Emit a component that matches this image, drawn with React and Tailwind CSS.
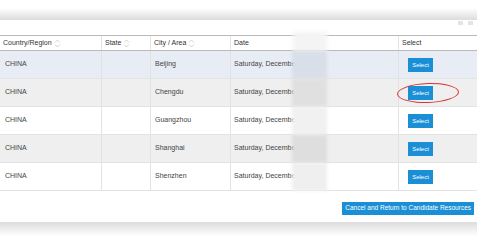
import React from "react";

const rows = [
  { city: "Beijing", bg: "bg-[#e8edf5]", blur: "bg-[#d9dfe8]", circled: false },
  { city: "Chengdu", bg: "bg-[#efefef]", blur: "bg-[#e0e0e0]", circled: true },
  { city: "Guangzhou", bg: "bg-white", blur: "bg-[#f1f1f1]", circled: false },
  { city: "Shanghai", bg: "bg-[#efefef]", blur: "bg-[#dedede]", circled: false },
  { city: "Shenzhen", bg: "bg-white", blur: "bg-[#efefef]", circled: false },
];

const SortIcon = () => (
  <svg width="7" height="9" viewBox="0 0 7 9" className="ml-[2px] inline-block">
    <path d="M1 3.5 L3.5 1 L6 3.5" fill="none" stroke="#c8c8c8" strokeWidth="0.8" />
    <path d="M1 5.5 L3.5 8 L6 5.5" fill="none" stroke="#c8c8c8" strokeWidth="0.8" />
  </svg>
);

const cols = "grid grid-cols-[102px_49px_80px_168px_1fr]";

export default function App() {
  return (
    <div className="w-[477px] h-[247px] bg-white overflow-hidden font-['Liberation_Sans',Arial,sans-serif]">
      {/* shadow above the dialog */}
      <div className="h-[20px] bg-gradient-to-b from-white from-40% to-[#dcdcdc]" />

      <div className="relative bg-white h-[202px] flex flex-col">
        {/* faint close marks */}
        <div className="absolute right-[4px] top-[1px] flex gap-[5px]">
          <div className="w-[5px] h-[4px] bg-[#e4e4e4]" />
          <div className="w-[5px] h-[4px] bg-[#e4e4e4]" />
        </div>

        <div className="h-[15px]" />

        {/* header */}
        <div className={`${cols} h-[16px] border-t border-b border-[#b9b9b9] text-[7px] text-[#333]`}>
          <div className="flex items-center pl-[3px] border-r border-[#e2e2e2]">
            Country/Region<SortIcon />
          </div>
          <div className="flex items-center pl-[3px] border-r border-[#e2e2e2]">
            State<SortIcon />
          </div>
          <div className="flex items-center pl-[3px] border-r border-[#e2e2e2]">
            City / Area<SortIcon />
          </div>
          <div className="relative flex items-center pl-[3px] border-r border-[#e2e2e2]">
            Date
            <div className="absolute left-[62px] top-[-4px] w-[34px] h-[20px] bg-[#f4f4f4] blur-[2px]" />
          </div>
          <div className="flex items-center pl-[3px]">Select</div>
        </div>

        {/* body */}
        {rows.map((r) => (
          <div
            key={r.city}
            className={`${cols} h-[28px] border-b border-[#e3e3e3] text-[7px] text-[#444] ${r.bg}`}
          >
            <div className="flex items-center pl-[5px] border-r border-[#e2e2e2]">CHINA</div>
            <div className="border-r border-[#e2e2e2]" />
            <div className="flex items-center pl-[4px] border-r border-[#e2e2e2]">{r.city}</div>
            <div className="relative flex items-center pl-[3px] border-r border-[#e2e2e2]">
              Saturday, December
              <div className={`absolute left-[61px] top-0 w-[35px] h-[28px] ${r.blur} blur-[1.5px]`} />
            </div>
            <div className="relative flex items-center pl-[9px]">
              <button className="w-[25px] h-[14px] bg-[#1b8fd6] text-white text-[6px] leading-none">
                Select
              </button>
              {r.circled && (
                <div className="absolute left-[-2px] top-[4px] w-[62px] h-[20px] rounded-[50%] border border-[#d9343a] -rotate-2" />
              )}
            </div>
          </div>
        ))}

        <div className="flex justify-end pr-[3px] pt-[11px]">
          <button className="h-[13px] px-[3px] bg-[#1b8fd6] text-white text-[6.5px] leading-none whitespace-nowrap">
            Cancel and Return to Candidate Resources
          </button>
        </div>
      </div>

      {/* shadow below the dialog */}
      <div className="h-[14px] bg-gradient-to-b from-[#dcdcdc] to-white" />
    </div>
  );
}
